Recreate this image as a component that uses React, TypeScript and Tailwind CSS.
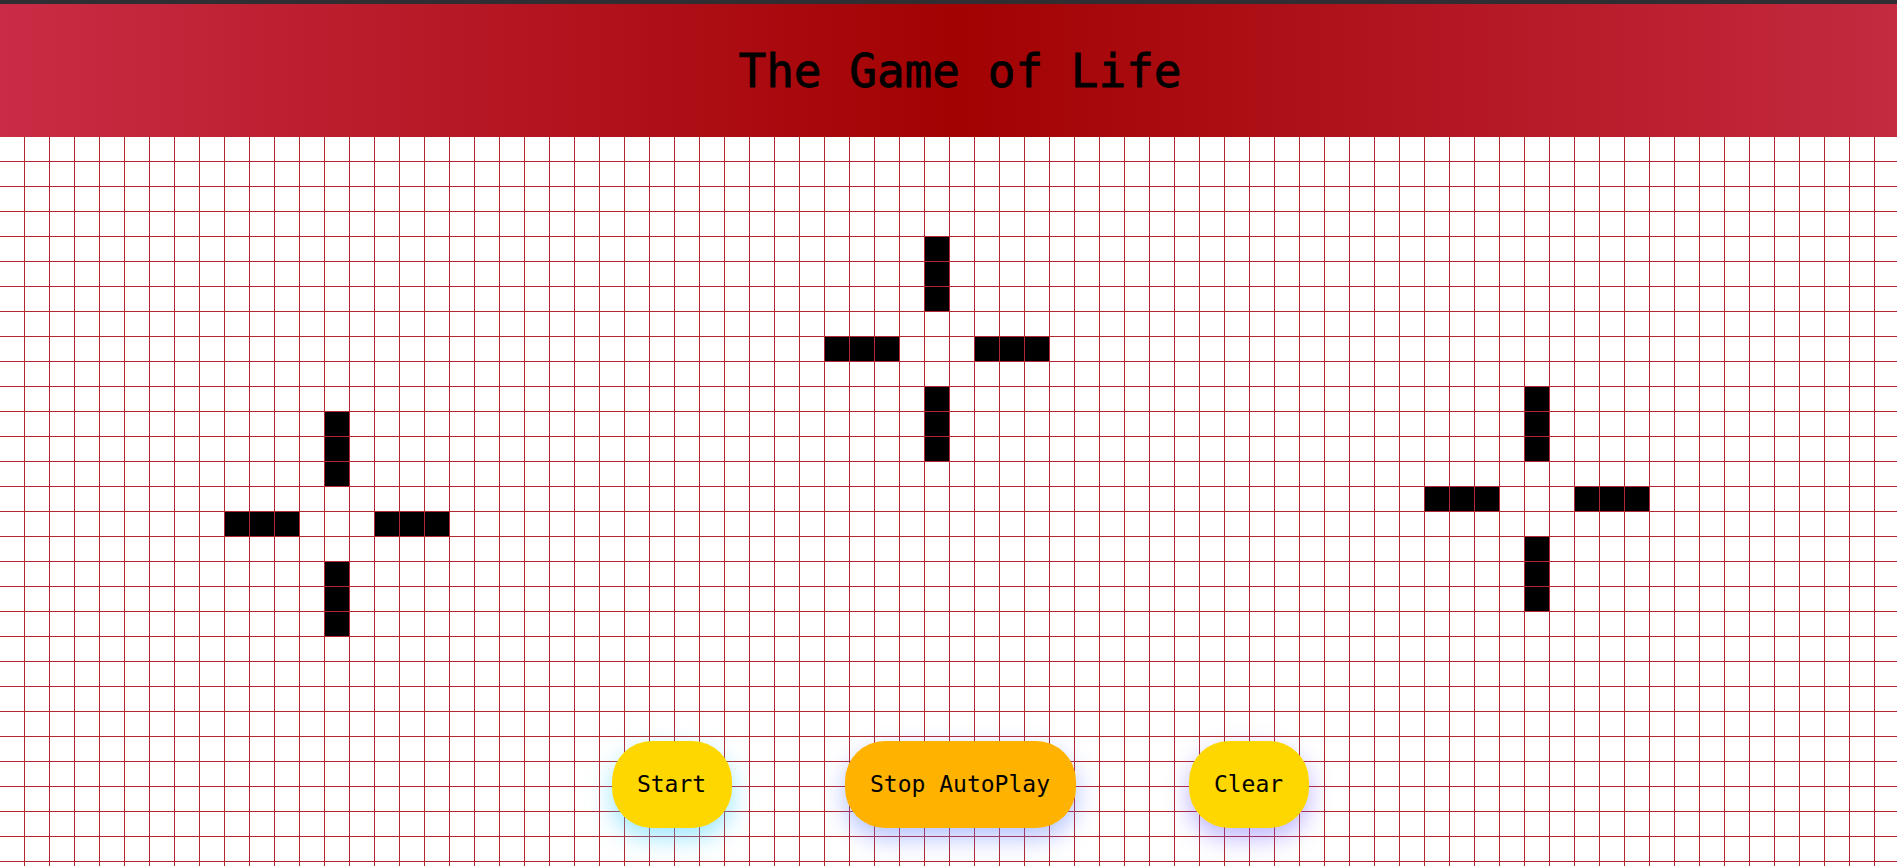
import React from "react";

const ROWS = 30;
const COLS = 77;

// centres of the three cross-shaped patterns (row, col)
const centres: [number, number][] = [
  [15, 13],
  [8, 37],
  [14, 61],
];

const alive = new Set<string>();
centres.forEach(([r, c]) => {
  for (const d of [-4, -3, -2, 2, 3, 4]) {
    alive.add(`${r + d}-${c}`);
    alive.add(`${r}-${c + d}`);
  }
});

const Cell = ({ on }: { on: boolean }) => (
  <div
    className={`w-[25px] h-[25px] shrink-0 border-r border-b border-[#b3262f] ${
      on ? "bg-black" : "bg-white"
    }`}
  />
);

const Board = () => (
  <div className="flex flex-col">
    {Array.from({ length: ROWS }).map((_, r) => (
      <div key={r} className="flex">
        {Array.from({ length: COLS }).map((_, c) => (
          <Cell key={c} on={alive.has(`${r}-${c}`)} />
        ))}
      </div>
    ))}
  </div>
);

const App = () => {
  return (
    <div
      className="relative w-screen h-screen overflow-hidden bg-white"
      style={{ fontFamily: '"DejaVu Sans Mono", "Liberation Mono", monospace' }}
    >
      <div className="h-[4px] bg-[#2f2f33]" />
      <header className="h-[133px] flex items-center justify-center pl-[23px] bg-[linear-gradient(to_right,#c92c45,#a20202_50.5%,#c42a40)]">
        <h1 className="text-[46px] leading-none text-black [-webkit-text-stroke:0.8px_black]">
          The Game of Life
        </h1>
      </header>

      <Board />

      <div className="absolute left-0 right-0 top-[741px] flex justify-center pl-[23px] gap-[113px]">
        <button className="w-[120px] h-[87px] rounded-[40px] bg-[#ffd700] text-[23px] text-black shadow-[0_10px_24px_rgba(60,210,255,0.5)]">
          Start
        </button>
        <button className="w-[231px] h-[87px] rounded-[40px] bg-[#ffb300] text-[23px] text-black shadow-[0_10px_24px_rgba(90,120,255,0.45)]">
          Stop AutoPlay
        </button>
        <button className="w-[120px] h-[87px] rounded-[40px] bg-[#ffd700] text-[23px] text-black shadow-[0_10px_24px_rgba(110,90,255,0.45)]">
          Clear
        </button>
      </div>
    </div>
  );
};

export default App;
